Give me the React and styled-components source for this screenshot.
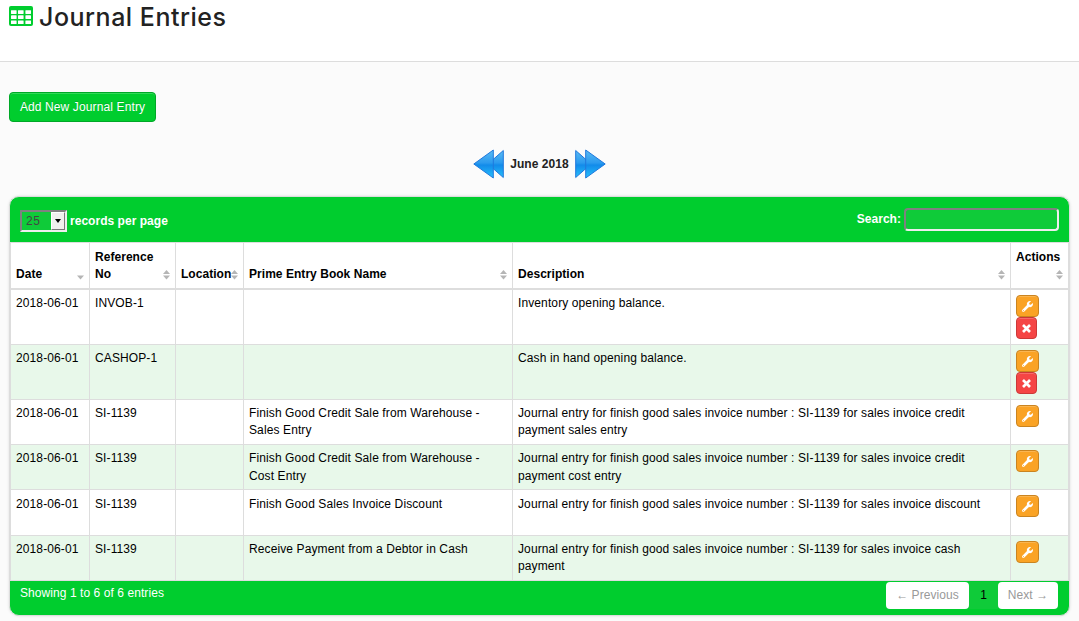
import React from 'react';
import styled, { createGlobalStyle } from 'styled-components';
import { FaWrench } from 'react-icons/fa';

const Global = createGlobalStyle`
  * { box-sizing: border-box; }
  body { margin: 0; background: #fbfbfb; color: #000; font: 12px/17.14px "Liberation Sans", Arial, sans-serif; letter-spacing: 0.11px; }
`;
const Page = styled.div`height: 621px; overflow: hidden;`;
const Header = styled.header`
  height: 62px; background: #fff; border-bottom: 1px solid #ddd; padding: 0 0 0 9px; display: flex; align-items: flex-start;
`;
const TableGlyph = styled.svg`width: 24px; height: 20px; margin: 6px 6px 0 0;`;
const Title = styled.h1`
  margin: 0; font: 500 25px/34px Inter, "Open Sans", sans-serif; letter-spacing: 0.52px; color: #222; white-space: nowrap;
`;
const Main = styled.main`padding: 30px 9px 0;`;
const AddButton = styled.button`
  display: block; width: 147px; height: 30px; padding: 0; border: 1px solid #00a827; border-radius: 4px;
  background: #00cd2e; color: #fff; font: 12px/17px "Liberation Sans", Arial, sans-serif; letter-spacing: 0.12px;
  box-shadow: inset 0 1px 0 #33d959; text-shadow: 0 -1px 0 rgba(0,0,0,.15); white-space: nowrap;
`;
const MonthNav = styled.nav`
  height: 74px; padding-top: 10px; display: flex; align-items: center; justify-content: center; gap: 6px;
  font-weight: bold; color: #222; white-space: nowrap;
`;
const Month = styled.span`padding-top: 2px; letter-spacing: 0.05px;`;
const Arrow = styled.svg`width: 31px; height: 30px; transform: ${p => (p.$flip ? 'scaleX(-1)' : 'none')};`;
const Panel = styled.section`
  width: 1061px; height: 420px; border: 1px solid #ddd; border-radius: 10px; background: #00cd2e;
  box-shadow: 0 0 3px rgba(0,0,0,.12);
`;
const Toolbar = styled.div`
  height: 45px; padding: 0 10px; display: flex; justify-content: space-between; color: #fff; font-weight: bold; letter-spacing: 0.03px;
`;
const Control = styled.label`display: flex; align-items: center; gap: 3px; padding-top: ${p => p.$top}px; white-space: nowrap;`;
const Caption = styled.span`padding-top: ${p => p.$drop || 0}px;`;
const Select = styled.span`
  width: 47px; height: 22px; border: 2px solid; border-color: #808080 #eee #eee #808080; background: #0fcb39;
  display: flex; justify-content: space-between; align-items: stretch; color: #444; font-weight: normal; line-height: 18px; padding-left: 4px;
  letter-spacing: 0.5px;
`;
const DropButton = styled.i`
  width: 14px; background: #f0f0ee; border: 1px solid; border-color: #fff #777 #777 #fff; display: flex; align-items: center; justify-content: center;
  &::after { content: ''; border: 3px solid transparent; border-top: 4px solid #000; border-bottom: 0; }
`;
const SearchInput = styled.input`
  width: 155px; height: 23px; border: 2px solid; border-color: #808080 #eee #eee #808080; border-radius: 4px; background: #0fcb39; outline: 0;
`;
const Table = styled.table`
  width: 1059px; table-layout: fixed; border-collapse: separate; border-spacing: 0; background: #fff;
`;
const Row = styled.tr`height: ${p => p.$h}px; line-height: ${p => p.$lead || 17.14}px; background: ${p => (p.$tint ? '#e8f8ea' : '#fff')};`;
const Th = styled.th`
  padding: 6px 5px 5px; height: 48px; border: solid #ddd; border-width: 1px 0 2px 1px; vertical-align: bottom; text-align: left;
  white-space: pre; line-height: 17px; letter-spacing: 0.04px; &:last-child { border-right-width: 1px; }
`;
const HeadCell = styled.div`display: flex; align-items: flex-end; justify-content: space-between; height: ${p => (p.$short ? '17px' : 'auto')};`;
const Sort = styled.svg`width: 7px; height: 10px; flex: none; margin: 0 0 3px;`;
const Td = styled.td`
  padding: 5px 5px 0; border: solid #ddd; border-width: 0 0 1px 1px; vertical-align: top; &:last-child { border-right-width: 1px; }
`;
const Actions = styled.div`display: flex; flex-direction: column; align-items: flex-start;`;
const ActionButton = styled.button`
  width: ${p => (p.$danger ? 21 : 23)}px; height: 22px; padding: 0; border-radius: 4px; display: flex; align-items: center; justify-content: center; color: #fff;
  background: ${p => (p.$danger ? '#f54545' : '#faa325')}; border: 1px solid ${p => (p.$danger ? '#cc3838' : '#ca8420')};
  box-shadow: inset 0 1px 0 rgba(255,255,255,.2);
`;
const Footer = styled.footer`height: 34px; padding: 0 11px 0 10px; display: flex; justify-content: space-between; color: #fff; letter-spacing: 0.07px;`;
const Info = styled.span`padding-top: 4px;`;
const Pager = styled.div`display: flex; margin-top: 1px; color: #999; text-align: center; line-height: 26px; height: 27px; white-space: nowrap;`;
const PageLink = styled.a`width: ${p => p.$w}px; height: 27px; background: #fff; border-radius: 4px;`;
const Current = styled.span`width: 29px; background: #0fcb39; color: #000;`;

const widths = [79, 86, 68, 269, 498, 59];
const columns = ['Date', 'Reference\nNo', 'Location', 'Prime Entry Book Name', 'Description'];
const journal = 'Journal entry for finish good sales invoice number : SI-1139 for sales invoice ';
const rows = [
  { h: 55, reference: 'INVOB-1', book: '', text: 'Inventory opening balance.', removable: true },
  { h: 55, reference: 'CASHOP-1', book: '', text: 'Cash in hand opening balance.', removable: true },
  { h: 45, reference: 'SI-1139', book: 'Finish Good Credit Sale from Warehouse - Sales Entry', text: journal + 'credit payment sales entry' },
  { h: 45, lead: 17.7, reference: 'SI-1139', book: 'Finish Good Credit Sale from Warehouse - Cost Entry', text: journal + 'credit payment cost entry' },
  { h: 46, lead: 19, reference: 'SI-1139', book: 'Finish Good Sales Invoice Discount', text: journal + 'discount' },
  { h: 45, reference: 'SI-1139', book: 'Receive Payment from a Debtor in Cash', text: journal + 'cash payment' },
];

const SortIcon = ({ down }) => (
  <Sort viewBox="0 0 7 10" fill="#b5b5b5">
    {!down && <path d="M0 4 3.5 0 7 4z" />}
    <path d="M0 5.5h7L3.5 9.5z" />
  </Sort>
);

const DoubleArrow = ({ flip }) => (
  <Arrow $flip={flip} viewBox="0 0 31 30">
    <defs>
      <linearGradient id="blue" x1="0" y1="0" x2="0" y2="1">
        <stop offset="0" stopColor="#5abcf5" /><stop offset=".46" stopColor="#2b9aee" /><stop offset=".54" stopColor="#128bea" /><stop offset="1" stopColor="#27c0fb" />
      </linearGradient>
    </defs>
    <g fill="url(#blue)" stroke="#2078dc" strokeWidth="1" strokeLinejoin="round">
      <path d="M30.3 1.5v27L15 15z" />
      <path d="M20.3 1v28L.8 15z" />
    </g>
  </Arrow>
);

export default function App() {
  return (
    <Page>
      <Global />
      <Header>
        <TableGlyph viewBox="0 0 24 20">
          <rect width="24" height="20" rx="2" fill="#00cd2e" />
          <g fill="#fff">
            {[2, 9, 16.4].map(x => [4.2, 9.3, 14.4].map(y => <rect key={x + '-' + y} x={x} y={y} width="5.6" height="3.7" rx=".4" />))}
          </g>
        </TableGlyph>
        <Title>Journal Entries</Title>
      </Header>
      <Main>
        <AddButton>Add New Journal Entry</AddButton>
        <MonthNav><DoubleArrow /><Month>June 2018</Month><DoubleArrow flip /></MonthNav>
        <Panel>
          <Toolbar>
            <Control $top={3}><Select>25<DropButton /></Select><Caption $drop={2}>records per page</Caption></Control>
            <Control $top={0}><Caption>Search:</Caption><SearchInput aria-label="Search" /></Control>
          </Toolbar>
          <Table>
            <colgroup>{widths.map((w, i) => <col key={i} style={{ width: w }} />)}</colgroup>
            <thead>
              <tr>
                {columns.map((c, i) => <Th key={c}><HeadCell>{c}<SortIcon down={i === 0} /></HeadCell></Th>)}
                <Th>Actions<HeadCell $short><span /><SortIcon /></HeadCell></Th>
              </tr>
            </thead>
            <tbody>
              {rows.map(({ h, lead, reference, book, text, removable }, i) => (
                <Row key={i} $h={h} $lead={lead} $tint={i % 2 === 1}>
                  <Td>2018-06-01</Td><Td>{reference}</Td><Td /><Td>{book}</Td><Td>{text}</Td>
                  <Td>
                    <Actions>
                      <ActionButton aria-label="Edit"><FaWrench size={11} /></ActionButton>
                      {removable && (
                        <ActionButton $danger aria-label="Delete">
                          <svg width="9" height="9" viewBox="0 0 9 9" stroke="#fff" strokeWidth="2.7"><path d="M1 1l7 7M8 1L1 8" /></svg>
                        </ActionButton>
                      )}
                    </Actions>
                  </Td>
                </Row>
              ))}
            </tbody>
          </Table>
          <Footer>
            <Info>Showing 1 to 6 of 6 entries</Info>
            <Pager><PageLink $w={83}>← Previous</PageLink><Current>1</Current><PageLink $w={60}>Next →</PageLink></Pager>
          </Footer>
        </Panel>
      </Main>
    </Page>
  );
}
